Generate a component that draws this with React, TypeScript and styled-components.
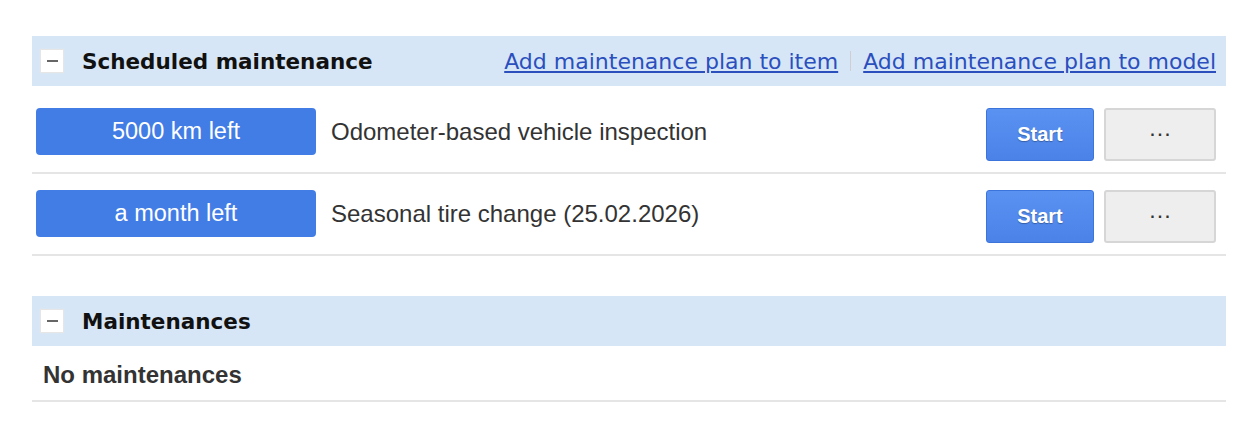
import React from "react";
import styled, { createGlobalStyle } from "styled-components";

const GlobalStyle = createGlobalStyle`
  body {
    margin: 0;
    background: #ffffff;
    font-family: "Liberation Sans", Arial, sans-serif;
  }
`;

const Page = styled.div`
  padding: 36px 30px 0 32px;
  display: flex;
  flex-direction: column;
`;

const Section = styled.section<{ $gap?: number }>`
  margin-bottom: ${(p) => p.$gap ?? 0}px;
`;

const SectionHeader = styled.header`
  height: 50px;
  background: #d6e6f7;
  display: flex;
  align-items: center;
  padding: 0 10px 0 9px;
  font-family: "DejaVu Sans", Verdana, sans-serif;
`;

const Toggle = styled.div`
  width: 22px;
  height: 22px;
  background: #ffffff;
  box-shadow: 0 0 1px 1px #e6e6e6;
  display: flex;
  align-items: center;
  justify-content: center;
  margin-right: 19px;
  &::before {
    content: "";
    width: 11px;
    height: 2px;
    background: #666666;
  }
`;

const Title = styled.h2`
  margin: 0;
  font-size: 21.5px;
  font-weight: bold;
  color: #111111;
  flex: 1;
`;

const Links = styled.div`
  display: flex;
  align-items: center;
  gap: 12px;
`;

const Link = styled.a`
  font-size: 22px;
  color: #2b4fbd;
  text-decoration: underline;
  cursor: pointer;
`;

const Divider = styled.span`
  width: 1px;
  height: 20px;
  background: #cfcfcf;
`;

const Row = styled.div`
  display: flex;
  align-items: flex-start;
  padding: 16px 10px 0 4px;
  height: 82px;
  box-sizing: border-box;
  border-bottom: 2px solid #e5e5e5;
  &:first-of-type {
    padding-top: 22px;
    height: 88px;
  }
`;

const Badge = styled.div`
  width: 280px;
  height: 47px;
  border-radius: 4px;
  background: #427de6;
  color: #ffffff;
  font-size: 23.5px;
  display: flex;
  align-items: center;
  justify-content: center;
  flex-shrink: 0;
`;

const Description = styled.div`
  flex: 1;
  margin-left: 15px;
  height: 48px;
  display: flex;
  align-items: center;
  font-size: 24px;
  color: #333333;
`;

const StartButton = styled.button`
  width: 108px;
  height: 53px;
  border: 1px solid #3b74db;
  border-radius: 3px;
  background: linear-gradient(#5a92f2, #4a82e8);
  color: #ffffff;
  font-family: "Liberation Sans", Arial, sans-serif;
  font-weight: bold;
  font-size: 20px;
  text-shadow: 0 1px 1px rgba(0, 0, 0, 0.3);
  cursor: pointer;
`;

const MoreButton = styled.button`
  width: 112px;
  height: 53px;
  margin-left: 10px;
  border: 2px solid #d6d6d6;
  border-radius: 3px;
  background: #eeeeee;
  color: #333333;
  font-family: "Liberation Sans", Arial, sans-serif;
  font-size: 16px;
  font-weight: bold;
  letter-spacing: 3px;
  padding: 0 0 8px 3px;
  cursor: pointer;
`;

const EmptyRow = styled.div`
  height: 56px;
  box-sizing: border-box;
  padding: 4px 11px 0;
  display: flex;
  align-items: center;
  font-size: 24px;
  font-weight: bold;
  color: #333333;
  border-bottom: 2px solid #e5e5e5;
`;

const plans = [
  { left: "5000 km left", name: "Odometer-based vehicle inspection" },
  { left: "a month left", name: "Seasonal tire change (25.02.2026)" },
];

export default function App() {
  return (
    <>
      <GlobalStyle />
      <Page>
        <Section $gap={40}>
          <SectionHeader>
            <Toggle />
            <Title>Scheduled maintenance</Title>
            <Links>
              <Link>Add maintenance plan to item</Link>
              <Divider />
              <Link>Add maintenance plan to model</Link>
            </Links>
          </SectionHeader>
          {plans.map((p) => (
            <Row key={p.name}>
              <Badge>{p.left}</Badge>
              <Description>{p.name}</Description>
              <StartButton>Start</StartButton>
              <MoreButton>...</MoreButton>
            </Row>
          ))}
        </Section>
        <Section>
          <SectionHeader>
            <Toggle />
            <Title>Maintenances</Title>
          </SectionHeader>
          <EmptyRow>No maintenances</EmptyRow>
        </Section>
      </Page>
    </>
  );
}
